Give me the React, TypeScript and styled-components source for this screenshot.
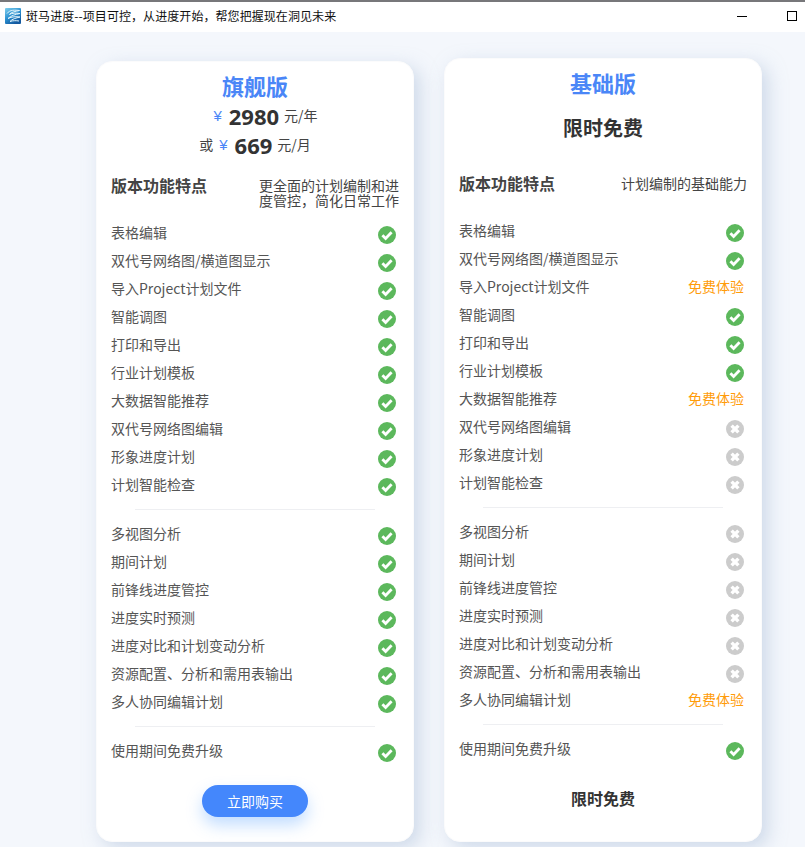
import React from "react";
import styled, { createGlobalStyle } from "styled-components";

const Global = createGlobalStyle`
  html, body { margin: 0; padding: 0; height: 100%; overflow: hidden; background: #f4f7fc; }
  body { font-family: "Noto Sans CJK SC", "Liberation Sans", sans-serif; }
`;
const Shell = styled.div`width: 805px; height: 847px; display: flex; flex-direction: column; background: #f4f7fc; overflow: hidden;`;
const TitleBar = styled.header`
  height: 30px; flex: none; background: #fff; border-top: 2px solid #77777a; display: flex; align-items: center;
  padding-left: 5px; font-size: 12px; color: #111; gap: 5px;
`;
const TitleText = styled.span`flex: 1; line-height: 30px; margin-top: -2px; letter-spacing: 0.07px;`;
const WinButton = styled.svg<{ $mr: number }>`width: 12px; height: 12px; flex: none; margin-right: ${(p) => p.$mr}px; margin-top: -2px;`;
const Board = styled.main`flex: 1; display: flex; justify-content: flex-start; align-items: flex-end; gap: 30px; padding: 0 0 5px 96px; min-height: 0;`;
const Card = styled.section<{ $h: number }>`
  width: 318px; height: ${(p) => p.$h}px; box-sizing: border-box; background: #fff; border: 1px solid #fbfbfc; border-radius: 16px;
  box-shadow: 6px 6px 18px rgba(170, 190, 215, 0.5); padding: 0 14px; display: flex; flex-direction: column;
`;
const PlanName = styled.h2`margin: 8px 0 0; height: 30px; line-height: 30px; font-size: 22px; font-weight: 700; color: #4a86f7; text-align: center;`;
const Price = styled.div<{ $h: number; $ml?: number }>`
  height: ${(p) => p.$h}px; margin-left: ${(p) => p.$ml ?? 0}px; display: flex; align-items: center; justify-content: center;
  font-size: 14px; color: #444; gap: 6px; white-space: nowrap;
`;
const Yen = styled.span`color: #4a86f7; font-size: 15px; font-family: "Liberation Sans", sans-serif;`;
const Amount = styled.strong`font-size: 22px; font-weight: 700; color: #333; font-family: "Open Sans", sans-serif; margin: 2px -1px 0 1px;`;
const FreeHeadline = styled.div`margin-top: 16px; height: 30px; line-height: 30px; text-align: center; font-size: 20px; font-weight: 700; color: #333;`;
const FeatureHead = styled.div<{ $h: number; $mt: number }>`height: ${(p) => p.$h}px; margin-top: ${(p) => p.$mt}px; display: flex; justify-content: space-between; align-items: flex-start;`;
const HeadTitle = styled.span`font-size: 16px; font-weight: 700; color: #444; line-height: 24px;`;
const HeadDesc = styled.span<{ $w?: number }>`font-size: 14px; color: #444; line-height: 15px; margin-top: 5px; ${(p) => (p.$w ? `width: ${p.$w}px;` : "")}`;
const Group = styled.div`display: flex; flex-direction: column;`;
const Row = styled.div`height: 28px; display: flex; justify-content: space-between; align-items: center; padding-right: 3px;`;
const RowLabel = styled.span`font-size: 14px; color: #555; margin-top: -7px; white-space: nowrap;`;
const Trial = styled.span`font-size: 14px; color: #ff9c0a; margin-top: -7px;`;
const Rule = styled.hr`width: 240px; height: 1px; border: 0; background: #eeeff2; margin: 8px auto 12px; flex: none;`;
const BuyButton = styled.button`
  width: 106px; height: 32px; align-self: center; margin-top: 18px; border: 0; border-radius: 16px; background: #4487fc; color: #fff;
  font: 400 14px "Noto Sans CJK SC", sans-serif; box-shadow: 0 8px 16px rgba(120, 180, 255, 0.45);
`;
const BottomFree = styled.div`text-align: center; font-size: 16px; font-weight: 700; color: #333; margin-top: 21px;`;
const Logo = styled.svg`width: 16px; height: 16px; flex: none; margin-top: -2px;`;
const StatusIcon = styled.svg`width: 18px; height: 18px; flex: none;`;

type S = "y" | "n" | "t";
const Status = ({ s }: { s: S }) => {
  if (s === "t") return <Trial>免费体验</Trial>;
  if (s === "y")
    return (
      <StatusIcon viewBox="0 0 18 18"><circle cx="9" cy="9" r="9" fill="#5cb85c" /><path d="M4.4 9.2 7.6 12.4 13.6 6.2" fill="none" stroke="#fff" strokeWidth="2.8" /></StatusIcon>
    );
  return (
    <StatusIcon viewBox="0 0 18 18"><circle cx="9" cy="9" r="9" fill="#cccccc" /><path d="M5.6 5.6 12.4 12.4M12.4 5.6 5.6 12.4" fill="none" stroke="#fff" strokeWidth="3.4" /></StatusIcon>
  );
};

const g1 = ["表格编辑", "双代号网络图/横道图显示", "导入Project计划文件", "智能调图", "打印和导出", "行业计划模板", "大数据智能推荐", "双代号网络图编辑", "形象进度计划", "计划智能检查"];
const g2 = ["多视图分析", "期间计划", "前锋线进度管控", "进度实时预测", "进度对比和计划变动分析", "资源配置、分析和需用表输出", "多人协同编辑计划"];
const g3 = ["使用期间免费升级"];
const b1: S[] = ["y", "y", "t", "y", "y", "y", "t", "n", "n", "n"];
const b2: S[] = ["n", "n", "n", "n", "n", "n", "t"];

const Features = ({ a, b }: { a?: S[]; b?: S[] }) => (
  <>
    <Group>{g1.map((t, i) => <Row key={t}><RowLabel>{t}</RowLabel><Status s={a ? a[i] : "y"} /></Row>)}</Group>
    <Rule />
    <Group>{g2.map((t, i) => <Row key={t}><RowLabel>{t}</RowLabel><Status s={b ? b[i] : "y"} /></Row>)}</Group>
    <Rule />
    <Group>{g3.map((t) => <Row key={t}><RowLabel>{t}</RowLabel><Status s="y" /></Row>)}</Group>
  </>
);

export default function App() {
  return (
    <Shell>
      <Global />
      <TitleBar>
        <Logo viewBox="0 0 16 16">
          <defs>
            <linearGradient id="logoFill" x1="0" y1="0" x2="0.6" y2="1">
              <stop offset="0" stopColor="#7fd0ee" />
              <stop offset="0.55" stopColor="#2a8fd0" />
              <stop offset="1" stopColor="#14599f" />
            </linearGradient>
          </defs>
          <rect width="16" height="16" rx="1" fill="url(#logoFill)" />
          <path d="M2 5.5C5 1.5 10 2 14.5 2.5C10 3.5 6 4 4.5 6.5C7 4.8 11 5 15 5.5C10 6.5 6 7.5 3 10.5C7 8.5 11 8.5 15 9C11 10 7 11 5 13.5C8 12.5 11 12.5 14 13" fill="none" stroke="#e4f5fb" strokeWidth="1" />
        </Logo>
        <TitleText>斑马进度--项目可控，从进度开始，帮您把握现在洞见未来</TitleText>
        <WinButton $mr={33} viewBox="0 0 12 12"><path d="M1 6.5H11" stroke="#000" strokeWidth="1" /></WinButton>
        <WinButton $mr={7} viewBox="0 0 12 12"><rect x="1.5" y="1.5" width="9" height="9" fill="none" stroke="#000" strokeWidth="1" /></WinButton>
      </TitleBar>
      <Board>
        <Card $h={781}>
          <PlanName>旗舰版</PlanName>
          <Price $h={30} $ml={21}><Yen>¥</Yen><Amount>2980</Amount><span>元/年</span></Price>
          <Price $h={28}><span>或</span><Yen>¥</Yen><Amount>669</Amount><span>元/月</span></Price>
          <FeatureHead $h={48} $mt={15}>
            <HeadTitle>版本功能特点</HeadTitle>
            <HeadDesc $w={140}>更全面的计划编制和进度管控，简化日常工作</HeadDesc>
          </FeatureHead>
          <Features />
          <BuyButton>立即购买</BuyButton>
        </Card>
        <Card $h={784}>
          <PlanName>基础版</PlanName>
          <FreeHeadline>限时免费</FreeHeadline>
          <FeatureHead $h={48} $mt={28}>
            <HeadTitle>版本功能特点</HeadTitle>
            <HeadDesc>计划编制的基础能力</HeadDesc>
          </FeatureHead>
          <Features a={b1} b={b2} />
          <BottomFree>限时免费</BottomFree>
        </Card>
      </Board>
    </Shell>
  );
}
